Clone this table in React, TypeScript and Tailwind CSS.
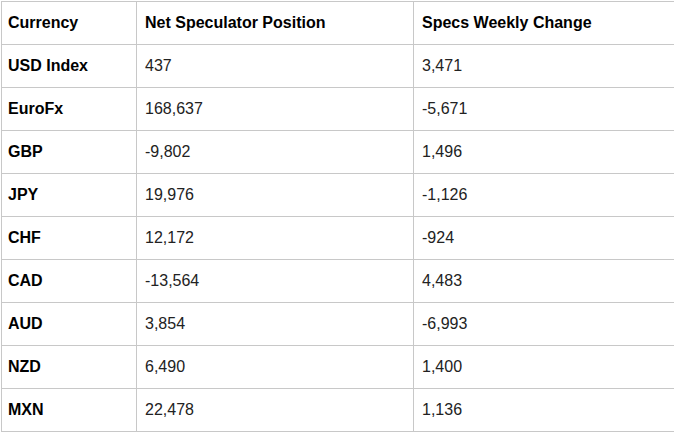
const ROWS: [string, string, string][] = [
  ["USD Index", "437", "3,471"],
  ["EuroFx", "168,637", "-5,671"],
  ["GBP", "-9,802", "1,496"],
  ["JPY", "19,976", "-1,126"],
  ["CHF", "12,172", "-924"],
  ["CAD", "-13,564", "4,483"],
  ["AUD", "3,854", "-6,993"],
  ["NZD", "6,490", "1,400"],
  ["MXN", "22,478", "1,136"],
];

export default function App() {
  return (
    <div className="h-[434px] w-[674px] overflow-hidden bg-white pl-px pt-px font-['Liberation_Sans',Arial,sans-serif] text-[16px] text-[#222]">
      <table className="w-[700px] table-fixed border-collapse">
        <colgroup>
          <col className="w-[135px]" />
          <col className="w-[277px]" />
          <col />
        </colgroup>
        <thead>
          <tr>
            {["Currency", "Net Speculator Position", "Specs Weekly Change"].map((h, i) => (
              <th
                key={h}
                className={`h-[43px] border border-[#c8c8c8] pr-2 text-left font-bold text-black ${i === 0 ? "pl-1.5" : "pl-2"}`}
              >
                {h}
              </th>
            ))}
          </tr>
        </thead>
        <tbody>
          {ROWS.map((r) => (
            <tr key={r[0]}>
              <td className="h-[43px] border border-[#c8c8c8] pl-1.5 pr-2 font-bold text-black">{r[0]}</td>
              <td className="h-[43px] border border-[#c8c8c8] px-2">{r[1]}</td>
              <td className="h-[43px] border border-[#c8c8c8] px-2">{r[2]}</td>
            </tr>
          ))}
        </tbody>
      </table>
    </div>
  );
}
